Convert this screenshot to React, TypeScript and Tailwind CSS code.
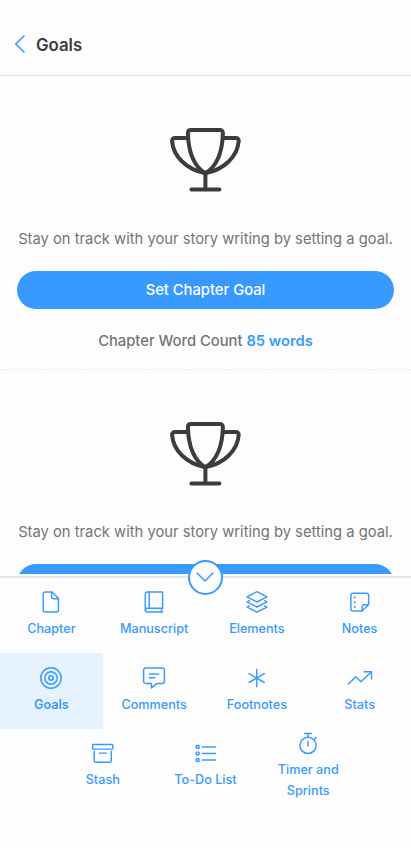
import type { ReactNode } from "react";

function Icon({ children }: { children: ReactNode }) {
  return (
    <svg
      width="26"
      height="24"
      viewBox="0 0 26 24"
      fill="none"
      stroke="currentColor"
      strokeWidth="1.45"
      strokeLinecap="round"
      strokeLinejoin="round"
      className="shrink-0"
    >
      {children}
    </svg>
  );
}

const icons: Record<string, ReactNode> = {
  Chapter: (
    <>
      <path d="M14.1 2H7.2a2 2 0 0 0-2 2v16a2 2 0 0 0 2 2h11.2a2 2 0 0 0 2-2V8.3z" />
      <path d="M13.6 2.2v4.9a1.7 1.7 0 0 0 1.7 1.7h4.9" />
    </>
  ),
  Manuscript: (
    <>
      <path d="M21.6 18.2V2H6.3a2 2 0 0 0-2 2v16.1c0 1 .7 1.8 1.8 1.8h15.5" />
      <path d="M21.6 18.2H6.1c-1 0-1.8.8-1.8 1.8M8.2 2.2v16M20.5 18.4v3.4" />
    </>
  ),
  Elements: (
    <>
      <path d="M13 1.7 23 6.9 13 12 3 6.9z" />
      <path d="m5.3 10.7-2.2 1.2L13 17l9.9-5.1-2.2-1.2" />
      <path d="m5.3 15.8-2.2 1.3L13 22.2l9.9-5.1-2.2-1.3" />
    </>
  ),
  Notes: (
    <>
      <path d="M15.1 21H5.9a2 2 0 0 1-2-2V5.2a2 2 0 0 1 2-2h13.7a2 2 0 0 1 2 2v9.4z" />
      <path d="M15.2 20.8v-4.4c0-1 .7-1.7 1.7-1.7h4.5" />
      <path d="M7.7 7.5v.1M7.7 12.2v.1M7.7 17v.1" strokeWidth="2" />
    </>
  ),
  Goals: (
    <>
      <circle cx="13" cy="12" r="10.2" />
      <circle cx="13" cy="12" r="6.2" />
      <circle cx="13" cy="12" r="2.2" strokeWidth="1.6" />
    </>
  ),
  Comments: (
    <>
      <path d="M4.6 2h16.8a2 2 0 0 1 2 2v11.4a2 2 0 0 1-2 2h-5.3L10.5 22v-4.6H4.6a2 2 0 0 1-2-2V4a2 2 0 0 1 2-2z" />
      <path d="M8.4 7.9h9.3M8.4 11.8h5.4" />
    </>
  ),
  Footnotes: <path d="M12.7 3.4v17.3M5.1 7.6l15.2 8.9M20.3 7.6 5.1 16.5" />,
  Stats: (
    <>
      <path d="m1.5 18.1 7.3-7.4 5.1 5.1L24.3 6" />
      <path d="M17.2 5.8h7.3v7.1" />
    </>
  ),
  Stash: (
    <>
      <rect x="2.6" y="3.5" width="20.2" height="4.6" rx=".7" />
      <path d="M4.2 10.2v9.1a2 2 0 0 0 2 2h13.1a2 2 0 0 0 2-2v-9.1M9.4 12.1h7" />
    </>
  ),
  "To-Do List": (
    <>
      <rect x="3.3" y="4.5" width="2.7" height="2.7" rx=".5" />
      <rect x="3.3" y="11.1" width="2.7" height="2.7" rx=".5" />
      <rect x="3.3" y="17.7" width="2.7" height="2.7" rx=".5" />
      <path d="M9.3 5.9h13.2M9.3 12.4h13.2M9.3 19h13.2" />
    </>
  ),
  "Timer and Sprints": (
    <>
      <circle cx="13" cy="14.4" r="8.1" />
      <path d="M9.8 2.5h6.5M13 2.7v3.4M19.1 8.5l1.9-2M13 10.5v4.4" />
    </>
  ),
};

function Trophy() {
  return (
    <svg
      width="72"
      height="66"
      viewBox="170 127 72 66"
      fill="none"
      stroke="#3c3c3c"
      strokeWidth="4"
      strokeLinecap="round"
      strokeLinejoin="round"
    >
      <path d="M191 130h28.8c2 0 3.2 1.2 3.1 3.2-.5 19-6.8 33.5-17.5 40.1-10.7-6.6-17-21.1-17.5-40.1 0-2 1.1-3.2 3.1-3.2z" />
      <path d="M187.8 138h-12.7c-2 0-3.2 1.2-3 3.2 1.2 15.2 14.3 28.3 33.3 32.1 19-3.8 32.1-16.9 33.3-32.1.2-2-1-3.2-3-3.2h-12.8" />
      <path d="M205.4 173.5v15.7M191.4 189.4h28" />
    </svg>
  );
}

function GoalSection({ kind, children }: { kind: string; children?: ReactNode }) {
  return (
    <section className="flex h-[293.6px] shrink-0 flex-col items-center border-b border-dashed border-[#eeeeee] px-[17px] pt-[51px]">
      <Trophy />
      <p className="mt-[33.8px] whitespace-nowrap text-[14.75px] leading-[24px] text-[#747474]">
        Stay on track with your story writing by setting a goal.
      </p>
      <button
        aria-label={`Set ${kind} Goal`}
        className="mt-[20.1px] h-[38px] w-full shrink-0 rounded-full bg-[#389aff] text-[14.75px] font-medium text-white"
      >
        {children ? `Set ${kind} Goal` : null}
      </button>
      {children}
    </section>
  );
}

function NavItem({ label }: { label: string }) {
  const active = label === "Goals";
  return (
    <button
      className={`flex h-[75.6px] w-[102.75px] flex-col items-center justify-center px-4 pb-[2px] ${
        active ? "bg-[#e6f3ff] font-semibold" : "font-medium"
      }`}
    >
      <Icon>{icons[label]}</Icon>
      <span className="mt-[4px] text-center text-[12.65px] leading-[21px]">{label}</span>
    </button>
  );
}

export default function App() {
  return (
    <div className="flex h-[848px] w-[411px] flex-col overflow-hidden bg-[#fdfdfd] font-['Inter',sans-serif]">
      <header className="flex h-[76px] shrink-0 items-center border-b border-[#dfdfdf] pl-[14px] pt-[13px]">
        <svg width="12" height="20" viewBox="0 0 12 20" fill="none" stroke="#389aff" strokeWidth="1.6" strokeLinecap="round">
          <path d="M10 2 1.8 10 10 18" />
        </svg>
        <h1 className="ml-[10px] pt-px text-[16.8px] font-semibold leading-6 text-[#3c3c3c]">Goals</h1>
      </header>
      <main className="flex h-[498px] shrink-0 flex-col overflow-hidden">
        <GoalSection kind="Chapter">
          <p className="mt-[20px] text-[14.75px] font-medium leading-[24px] text-[#747474]">
            Chapter Word Count <span className="font-semibold text-[#389aff]">85 words</span>
          </p>
        </GoalSection>
        <GoalSection kind="Manuscript" />
      </main>
      <nav className="relative mt-[2px] grow border-t-2 border-[#e6e6e6] text-[#389aff]">
        <button
          aria-label="Collapse menu"
          className="absolute -top-[18.5px] left-[187.5px] flex size-[35px] items-center justify-center rounded-full border-2 border-[#389aff] bg-[#fdfdfd]"
        >
          <svg width="20" height="12" viewBox="0 0 20 12" fill="none" stroke="currentColor" strokeWidth="1.5" strokeLinecap="round" strokeLinejoin="round" className="shrink-0">
            <path d="m2 2 8 8 8-8" />
          </svg>
        </button>
        <div className="-mt-[0.4px] flex flex-wrap justify-center">
          {Object.keys(icons).map((label) => (
            <NavItem key={label} label={label} />
          ))}
        </div>
      </nav>
    </div>
  );
}
